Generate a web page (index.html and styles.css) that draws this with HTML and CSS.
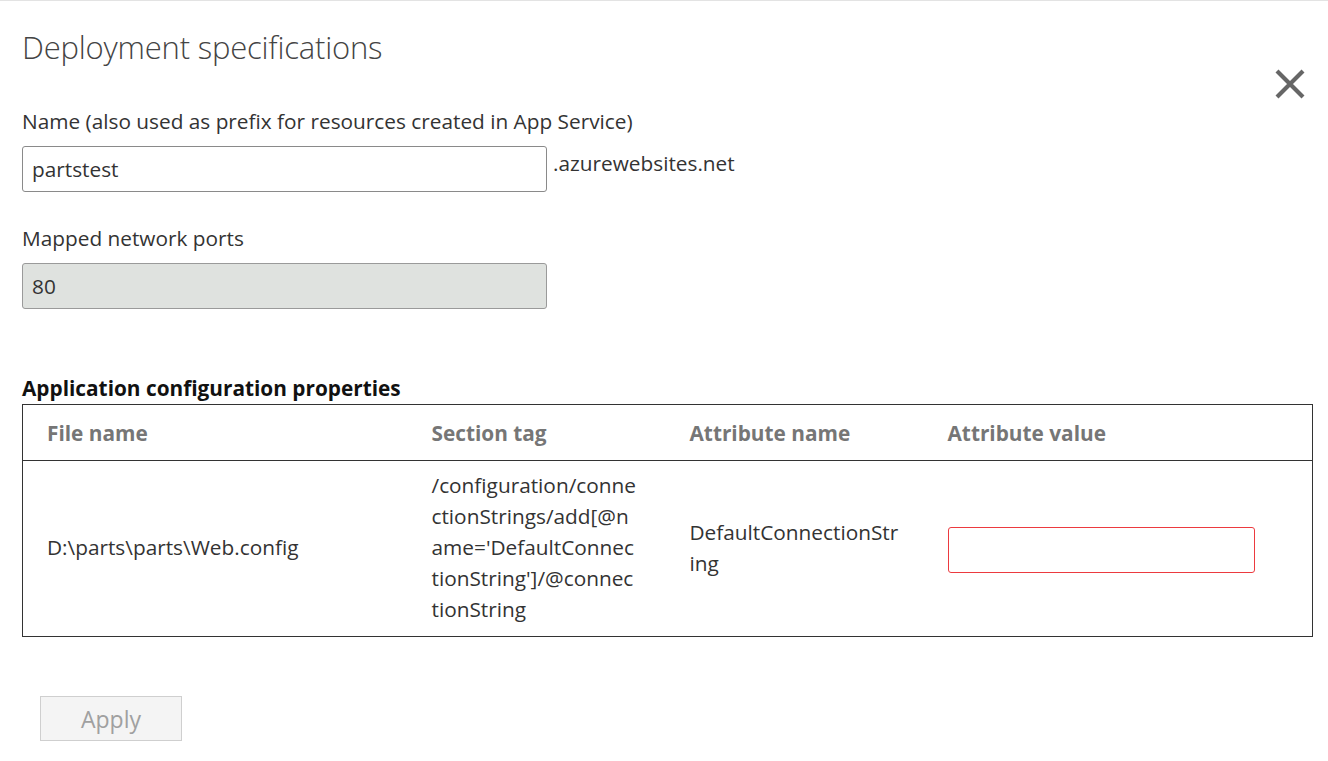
FILE: index.html
```html
<!DOCTYPE html>
<html>
<head>
<meta charset="utf-8">
<link rel="stylesheet" href="styles.css">
</head>
<body>
<div class="page">
  <div class="header">
    <h1 class="title">Deployment specifications</h1>
    <button class="close" aria-label="Close">
      <svg width="32" height="32" viewBox="0 0 32 32"><path d="M3 3 L29 29 M29 3 L3 29" stroke="#666" stroke-width="4.2" fill="none"/></svg>
    </button>
  </div>

  <div class="field first">
    <label class="label">Name (also used as prefix for resources created in App Service)</label>
    <div class="inline">
      <div class="input">partstest</div>
      <span class="suffix">.azurewebsites.net</span>
    </div>
  </div>

  <div class="field">
    <label class="label">Mapped network ports</label>
    <div class="input disabled">80</div>
  </div>

  <h2 class="section">Application configuration properties</h2>
  <table class="grid">
    <colgroup>
      <col class="c1"><col class="c2"><col class="c3"><col class="c4">
    </colgroup>
    <thead>
      <tr><th>File name</th><th>Section tag</th><th>Attribute name</th><th>Attribute value</th></tr>
    </thead>
    <tbody>
      <tr>
        <td>D:\parts\parts\Web.config</td>
        <td class="wrap">/configuration/conne<wbr>ctionStrings/add[@n<wbr>ame='DefaultConnec<wbr>tionString']/@connec<wbr>tionString</td>
        <td class="wrap">DefaultConnectionStr<wbr>ing</td>
        <td><div class="value-input"></div></td>
      </tr>
    </tbody>
  </table>

  <div class="actions">
    <button class="apply" disabled>Apply</button>
  </div>
</div>
</body>
</html>
```

FILE: styles.css
```css
html, body {
  margin: 0;
  padding: 0;
  background: #fff;
}
body {
  font-family: "Open Sans", "Noto Sans", sans-serif;
  color: #333;
  border-top: 1px solid #e3e3e3;
  height: 760px;
  overflow: hidden;
}
.page {
  padding: 0 16px 0 22px;
}
.header {
  display: flex;
  justify-content: space-between;
  align-items: flex-start;
}
.title {
  margin: 26px 0 0 0;
  font-size: 31px;
  font-weight: 300;
  color: #444;
  line-height: 40px;
  letter-spacing: -0.2px;
}
.close {
  margin: 67px 6px 0 0;
  padding: 0;
  border: 0;
  background: none;
  width: 32px;
  height: 32px;
}
.close svg { display: block; }
.field { margin-top: 32px; }
.field.first { margin-top: 7px; }
.label {
  display: block;
  font-size: 20.8px;
  line-height: 28px;
  color: #333;
  margin-bottom: 11px;
}
.inline {
  display: flex;
  align-items: flex-start;
  gap: 6px;
}
.input {
  box-sizing: border-box;
  width: 525px;
  height: 46px;
  border: 1px solid #8a8a8a;
  border-radius: 3px;
  padding: 0 9px;
  font-size: 20.8px;
  line-height: 44px;
  color: #333;
}
.input.disabled {
  background: #dfe2df;
  border-color: #9a9a9a;
}
.suffix {
  font-size: 20.8px;
  line-height: 28px;
  padding-top: 3px;
  color: #333;
}
.section {
  margin: 65px 0 2px 0;
  font-size: 20.8px;
  font-weight: 700;
  line-height: 28px;
  color: #111;
}
.grid {
  width: 1291px;
  border-collapse: collapse;
  border: 1.5px solid #333;
  table-layout: fixed;
}
.c1 { width: 385px; }
.c2 { width: 258px; }
.c3 { width: 258px; }
.c4 { width: auto; }
.grid th {
  text-align: left;
  font-size: 20.8px;
  font-weight: 700;
  color: #767676;
  height: 55px;
  padding: 0 10px 0 24px;
  border-bottom: 1.5px solid #333;
}
.grid td {
  font-size: 20.8px;
  line-height: 31px;
  color: #333;
  padding: 9px 10px 11px 24px;
  vertical-align: middle;
}
.grid td.wrap {
  word-break: normal;
  overflow-wrap: normal;
}
.value-input {
  box-sizing: border-box;
  width: 307px;
  height: 46px;
  margin-top: 4px;
  border: 1px solid #ec3a3f;
  border-radius: 3px;
  background: #fff;
}
.actions {
  margin-top: 59px;
  padding-left: 18px;
}
.apply {
  box-sizing: border-box;
  width: 142px;
  height: 45px;
  background: #f4f4f4;
  border: 1px solid #cfcfcf;
  color: #a0a0a0;
  font-family: "Open Sans", "Noto Sans", sans-serif;
  font-size: 23px;
  padding: 0;
}
```
